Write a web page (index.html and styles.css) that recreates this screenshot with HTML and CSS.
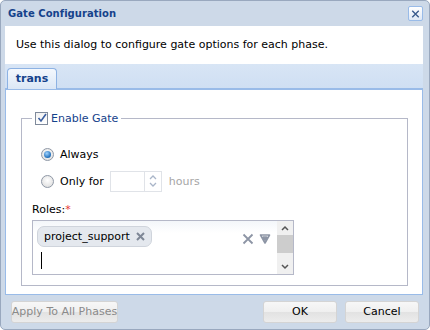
FILE: index.html
```html
<!DOCTYPE html>
<html>
<head>
<meta charset="utf-8">
<link rel="stylesheet" href="styles.css">
</head>
<body>
<div class="win">
  <div class="header">
    <span class="title">Gate Configuration</span>
    <span class="close"><svg width="14" height="14" viewBox="0 0 14 14"><path d="M3.5 3.5 L10.5 10.5 M10.5 3.5 L3.5 10.5" stroke="#3a5a8c" stroke-width="1.5" fill="none"/></svg></span>
  </div>
  <div class="desc">Use this dialog to configure gate options for each phase.</div>
  <div class="tabstrip"><div class="tab">trans</div></div>
  <div class="tabbody">
    <div class="fieldset">
      <div class="legend">
        <span class="cb"><svg width="10" height="10" viewBox="0 0 10 10"><path d="M1.5 5 L4 8 L9 1" stroke="#3b5fa0" stroke-width="1.6" fill="none"/></svg></span>
        <span class="legtext">Enable Gate</span>
      </div>
      <div class="radios">
        <div class="row"><span class="radio on"></span><span class="lbl">Always</span></div>
        <div class="row"><span class="radio"></span><span class="lbl">Only for</span>
          <span class="spin"><span class="spinin"></span><span class="spinbtn">
            <svg width="12" height="18" viewBox="0 0 12 18"><path d="M3 7 L6 4 L9 7 M3 11 L6 14 L9 11" stroke="#a9b5c8" stroke-width="1.3" fill="none"/></svg>
          </span></span>
          <span class="hours">hours</span>
        </div>
      </div>
      <div class="roleslbl">Roles:<span class="req">*</span></div>
      <div class="tagfield">
        <div class="tagarea">
          <div class="tagline">
            <span class="pill">project_support <svg width="9" height="9" viewBox="0 0 9 9"><path d="M1 1 L8 8 M8 1 L1 8" stroke="#7e8796" stroke-width="2" fill="none"/></svg></span>
            <span class="tools">
              <svg width="12" height="12" viewBox="0 0 12 12"><path d="M1.5 1.5 L10.5 10.5 M10.5 1.5 L1.5 10.5" stroke="#8d95a5" stroke-width="1.8" fill="none"/></svg>
              <svg width="12" height="12" viewBox="0 0 12 12"><path d="M1.5 2 L10.5 2 L6 10 Z M4.5 4 L7.5 4 L6 6.8 Z" stroke="#8d95a5" stroke-width="1.6" fill="none" stroke-linejoin="round"/></svg>
            </span>
          </div>
          <div class="cursor"></div>
        </div>
        <div class="sbar">
          <svg width="16" height="14" viewBox="0 0 16 14"><path d="M5 9 L8 6 L11 9" stroke="#555" stroke-width="1.5" fill="none"/></svg>
          <div class="thumb"></div>
          <div class="sfill"></div>
          <svg width="16" height="14" viewBox="0 0 16 14"><path d="M5 5 L8 8 L11 5" stroke="#555" stroke-width="1.5" fill="none"/></svg>
        </div>
      </div>
    </div>
  </div>
  <div class="footer">
    <span class="btn dis wide">Apply To All Phases</span>
    <span class="spacer"></span>
    <span class="btn">OK</span>
    <span class="btn">Cancel</span>
  </div>
</div>
</body>
</html>
```
FILE: styles.css
```css
* { box-sizing: border-box; }
html, body { margin: 0; padding: 0; background: #fff; }
body { font-family: "DejaVu Sans", "Liberation Sans", sans-serif; font-size: 11px; color: #000; }
.win {
  width: 430px; height: 330px;
  background: #cdd9e8;
  border: 1px solid #99a8be;
  border-radius: 5px;
  padding: 0 4px 0 4px;
  display: flex; flex-direction: column;
}
.header {
  height: 25px; display: flex; align-items: center; justify-content: space-between;
  padding: 0 2px 0 3px;
}
.title { font-weight: bold; font-size: 10px; color: #15428b; letter-spacing: 0.05px; }
.close {
  width: 15px; height: 15px; border: 1px solid #99bbe8; border-radius: 2px;
  background: linear-gradient(#fff, #dfe8f5);
  display: flex; align-items: center; justify-content: center; margin-top: 1px;
}
.close svg { display: block; }
.desc {
  background: #fff; height: 39px; padding: 0 11px; display: flex; align-items: center;
  font-size: 11px; color: #000; margin-right: 2px;
}
.tabstrip {
  height: 25px; background: linear-gradient(#d8e5f5, #cfdff3);
  border-bottom: 1px solid #99bbe8; display: flex; align-items: flex-end; padding-left: 2px;
  margin-right: 2px;
}
.tab {
  height: 21px; width: 50px; border: 1px solid #8db2e3; border-bottom: none;
  border-radius: 4px 4px 0 0; background: linear-gradient(#f4f8fd, #dbe7f6);
  font-weight: bold; font-size: 11px; color: #15428b; display: flex; align-items: center; justify-content: center;
  margin-bottom: -1px; position: relative;
}
.tabbody {
  flex: 1; background: #fff; border: 1px solid #99bbe8; border-top: 1px solid #99bbe8;
  padding: 28px 14px 8px 15px; margin-right: 2px;
  display: flex; flex-direction: column;
}
.fieldset {
  border: 1px solid #b5b8c8; flex: 1; position: relative;
  padding: 25px 10px 10px 10px;
}
.legend {
  position: absolute; top: -8px; left: 10px; background: #fff; display: flex; align-items: center;
  padding: 0 3px 0 3px; height: 15px;
}
.cb {
  width: 13px; height: 13px; border: 1px solid #7f8a9b; background: linear-gradient(#f2f2f2, #fff);
  display: flex; align-items: center; justify-content: center; margin-right: 3px;
}
.legtext { color: #15428b; font-size: 11px; }
.radios { padding-left: 9px; display: flex; flex-direction: column; gap: 6px; }
.row { display: flex; align-items: center; height: 21px; }
.radio {
  width: 13px; height: 13px; border-radius: 50%; border: 1px solid #8f98a6;
  background: radial-gradient(circle at 50% 40%, #fff, #d8d8d8); margin-right: 6px; position: relative;
}
.radio.on::after {
  content: ""; position: absolute; left: 2px; top: 2px; width: 7px; height: 7px; border-radius: 50%;
  background: radial-gradient(circle at 40% 35%, #9fd3ff, #1f6db8 70%, #1a4d87);
}
.lbl { font-size: 11px; }
.spin { display: flex; height: 21px; border: 1px solid #e0e3e8; margin-left: 6px; }
.spinin { width: 33px; }
.spinbtn { width: 17px; border-left: 1px solid #e0e3e8; display: flex; align-items: center; justify-content: center; }
.hours { color: #a6a6a6; margin-left: 7px; font-size: 11px; }
.roleslbl { margin-top: 11px; font-size: 11px; height: 16px; }
.req { color: #e83333; }
.tagfield {
  margin-top: 1px; height: 55px; border: 1px solid #b5b8c8; display: flex; width: 262px;
}
.tagarea { flex: 1; padding: 5px 4px 0 4px; background: linear-gradient(#f3f6fa, #fff 12px); }
.tagline { display: flex; align-items: center; justify-content: space-between; height: 21px; }
.pill {
  display: inline-flex; align-items: center; gap: 6px; height: 21px; padding: 0 6px 0 6px;
  background: #e4e8ee; border: 1px solid #cfd4dc; border-radius: 7px; font-size: 11px;
}
.tools { display: flex; gap: 5px; margin-top: 5px; margin-right: 2px; }
.cursor { width: 1px; height: 17px; background: #000; margin: 5px 0 0 4px; }
.sbar { width: 16px; background: #f0f0f0; display: flex; flex-direction: column; }
.sbar svg { display: block; }
.thumb { height: 18px; background: #cdcdcd; }
.sfill { flex: 1; }
.footer {
  height: 35px; display: flex; align-items: center; padding: 0 6px 0 6px; gap: 8px;
}
.spacer { flex: 1; }
.btn {
  height: 22px; width: 74px; display: flex; align-items: center; justify-content: center;
  border: 1px solid #d4d4d4; border-radius: 3px;
  background: linear-gradient(#f7f7f7 0%, #efefef 50%, #e2e2e2 51%, #ececec 100%);
  font-size: 11px; color: #000; white-space: nowrap;
}
.btn.dis { color: #8a8a8a; }
.btn.wide { width: 107px; }
```
